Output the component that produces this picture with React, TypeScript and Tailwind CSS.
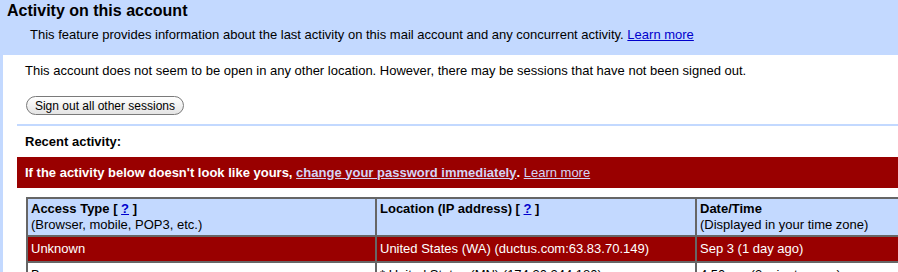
import React from 'react';

const rows = [
  {
    type: 'Unknown',
    location: 'United States (WA) (ductus.com:63.83.70.149)',
    time: 'Sep 3 (1 day ago)',
    alert: true,
  },
  {
    type: 'Browser',
    location: '* United States (MN) (174.30.244.180)',
    time: '4:50 pm (3 minutes ago)',
    alert: false,
  },
];

export default function App() {
  return (
    <div
      className="w-[898px] h-[272px] overflow-hidden bg-[#c3d9ff] text-black text-[13px] leading-[16px]"
      style={{ fontFamily: '"Liberation Sans", Arial, sans-serif' }}
    >
      {/* Header band */}
      <div className="pl-[7px] pt-[2px] pb-[12px]">
        <h1 className="text-[16px] leading-[18px] font-bold">Activity on this account</h1>
        <p className="mt-[7px] pl-[23px] whitespace-nowrap">
          This feature provides information about the last activity on this mail account and any concurrent activity.{' '}
          <a href="#" className="text-[#0000cc] underline">Learn more</a>
        </p>
      </div>

      {/* White panel */}
      <div className="ml-[3px] bg-white pl-[14px] pt-[8px] h-full">
        <div className="pl-[8px]">
          <p className="whitespace-nowrap">
            This account does not seem to be open in any other location. However, there may be sessions that have not been signed out.
          </p>
          <button className="mt-[17px] ml-[1px] h-[19px] w-[158px] rounded-full border border-[#7a7a7a] bg-gradient-to-b from-white to-[#e4e4e4] text-[12px] leading-[16px] text-black">
            Sign out all other sessions
          </button>
        </div>

        <div className="mt-[9px] h-[2px] bg-[#c3d9ff]" />

        <p className="mt-[8px] pl-[8px] font-bold">Recent activity:</p>

        <div className="mt-[7px] h-[31px] bg-[#990000] pl-[8px] flex items-center text-white font-bold whitespace-nowrap">
          If the activity below doesn't look like yours,&nbsp;
          <a href="#" className="text-[#d4d4f4] underline">change your password immediately</a>
          .&nbsp;
          <a href="#" className="text-[#d4d4f4] underline font-normal">Learn more</a>
        </div>

        {/* Activity table */}
        <div className="mt-[9px] ml-[9px] w-[971px] grid grid-cols-[347px_318px_300px] gap-[2px] p-[2px] bg-[#666666]">
          <div className="bg-[#c3d9ff] pl-[3px] py-[2px]">
            <div className="font-bold">
              Access Type [ <a href="#" className="text-[#0000cc] underline">?</a> ]
            </div>
            <div>(Browser, mobile, POP3, etc.)</div>
          </div>
          <div className="bg-[#c3d9ff] pl-[3px] py-[2px]">
            <div className="font-bold">
              Location (IP address) [ <a href="#" className="text-[#0000cc] underline">?</a> ]
            </div>
          </div>
          <div className="bg-[#c3d9ff] pl-[3px] py-[2px]">
            <div className="font-bold">Date/Time</div>
            <div>(Displayed in your time zone)</div>
          </div>

          {rows.map((row) => {
            const cell = row.alert
              ? 'bg-[#990000] text-white pl-[3px] py-[4px] whitespace-nowrap'
              : 'bg-white text-black pl-[3px] py-[4px] whitespace-nowrap';
            return (
              <React.Fragment key={row.location}>
                <div className={cell}>{row.type}</div>
                <div className={cell}>{row.location}</div>
                <div className={cell}>{row.time}</div>
              </React.Fragment>
            );
          })}
        </div>
      </div>
    </div>
  );
}
